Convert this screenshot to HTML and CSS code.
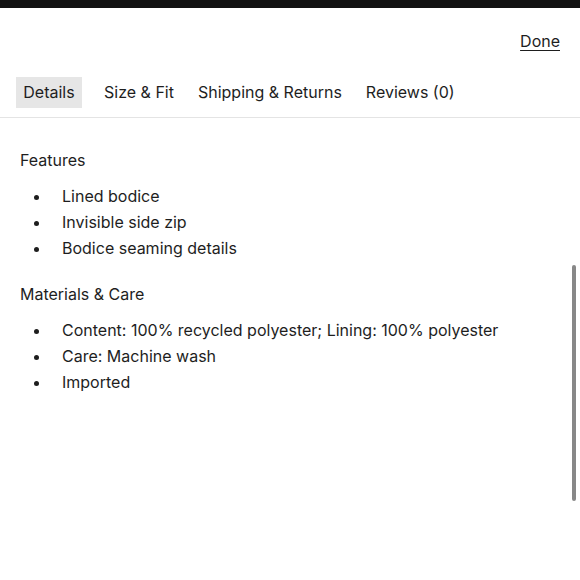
FILE: index.html
```html
<!DOCTYPE html>
<html lang="en">
<head>
<meta charset="utf-8">
<title>Details</title>
<link rel="stylesheet" href="styles.css">
</head>
<body>
<div class="topbar"></div>
<div class="header">
  <a class="done" href="#">Done</a>
</div>
<nav class="tabs">
  <span class="tab active">Details</span>
  <span class="tab">Size &amp; Fit</span>
  <span class="tab">Shipping &amp; Returns</span>
  <span class="tab">Reviews (0)</span>
</nav>
<main class="content">
  <h2 class="section-title">Features</h2>
  <ul class="bullets">
    <li>Lined bodice</li>
    <li>Invisible side zip</li>
    <li>Bodice seaming details</li>
  </ul>
  <h2 class="section-title">Materials &amp; Care</h2>
  <ul class="bullets">
    <li>Content: 100% recycled polyester; Lining: 100% polyester</li>
    <li>Care: Machine wash</li>
    <li>Imported</li>
  </ul>
</main>
<div class="scrollbar"></div>
</body>
</html>
```

FILE: styles.css
```css
html, body {
  margin: 0;
  padding: 0;
  background: #ffffff;
}
body {
  width: 580px;
  height: 580px;
  overflow: hidden;
  position: relative;
  font-family: Inter, "Noto Sans", sans-serif;
  font-size: 16px;
  color: #1e1e1e;
}
.topbar {
  height: 8px;
  background: #121212;
}
.header {
  display: flex;
  justify-content: flex-end;
  padding: 23px 20px 0 0;
  height: 20px;
  line-height: 20px;
}
.done {
  color: #1e1e1e;
  text-decoration: underline;
  text-underline-offset: 3px;
  text-decoration-thickness: 1px;
}
.tabs {
  display: flex;
  gap: 12px;
  margin-top: 25px;
  padding: 1px 0 9px 16px;
  border-bottom: 1px solid #e4e4e4;
}
.tab {
  padding: 0 6px;
  height: 31px;
  line-height: 31px;
}
.tab.active {
  background: #e6e6e6;
  min-width: 54px;
  text-align: center;
  margin-right: 4px;
}
.content {
  padding: 32px 20px 0 20px;
}
.section-title {
  margin: 0;
  font-size: 16px;
  font-weight: 400;
  line-height: 20px;
}
.bullets {
  list-style: none;
  margin: 13px 0 23px 0;
  padding: 0;
}
.bullets li {
  display: flex;
  align-items: center;
  height: 26px;
  line-height: 26px;
}
.bullets li::before {
  content: "";
  width: 5px;
  height: 5px;
  border-radius: 50%;
  background: #1e1e1e;
  margin: 2px 23px 0 14px;
  flex: none;
}
.scrollbar {
  position: absolute;
  right: 4px;
  top: 265px;
  width: 4px;
  height: 236px;
  border-radius: 2px;
  background: #888888;
}
```
